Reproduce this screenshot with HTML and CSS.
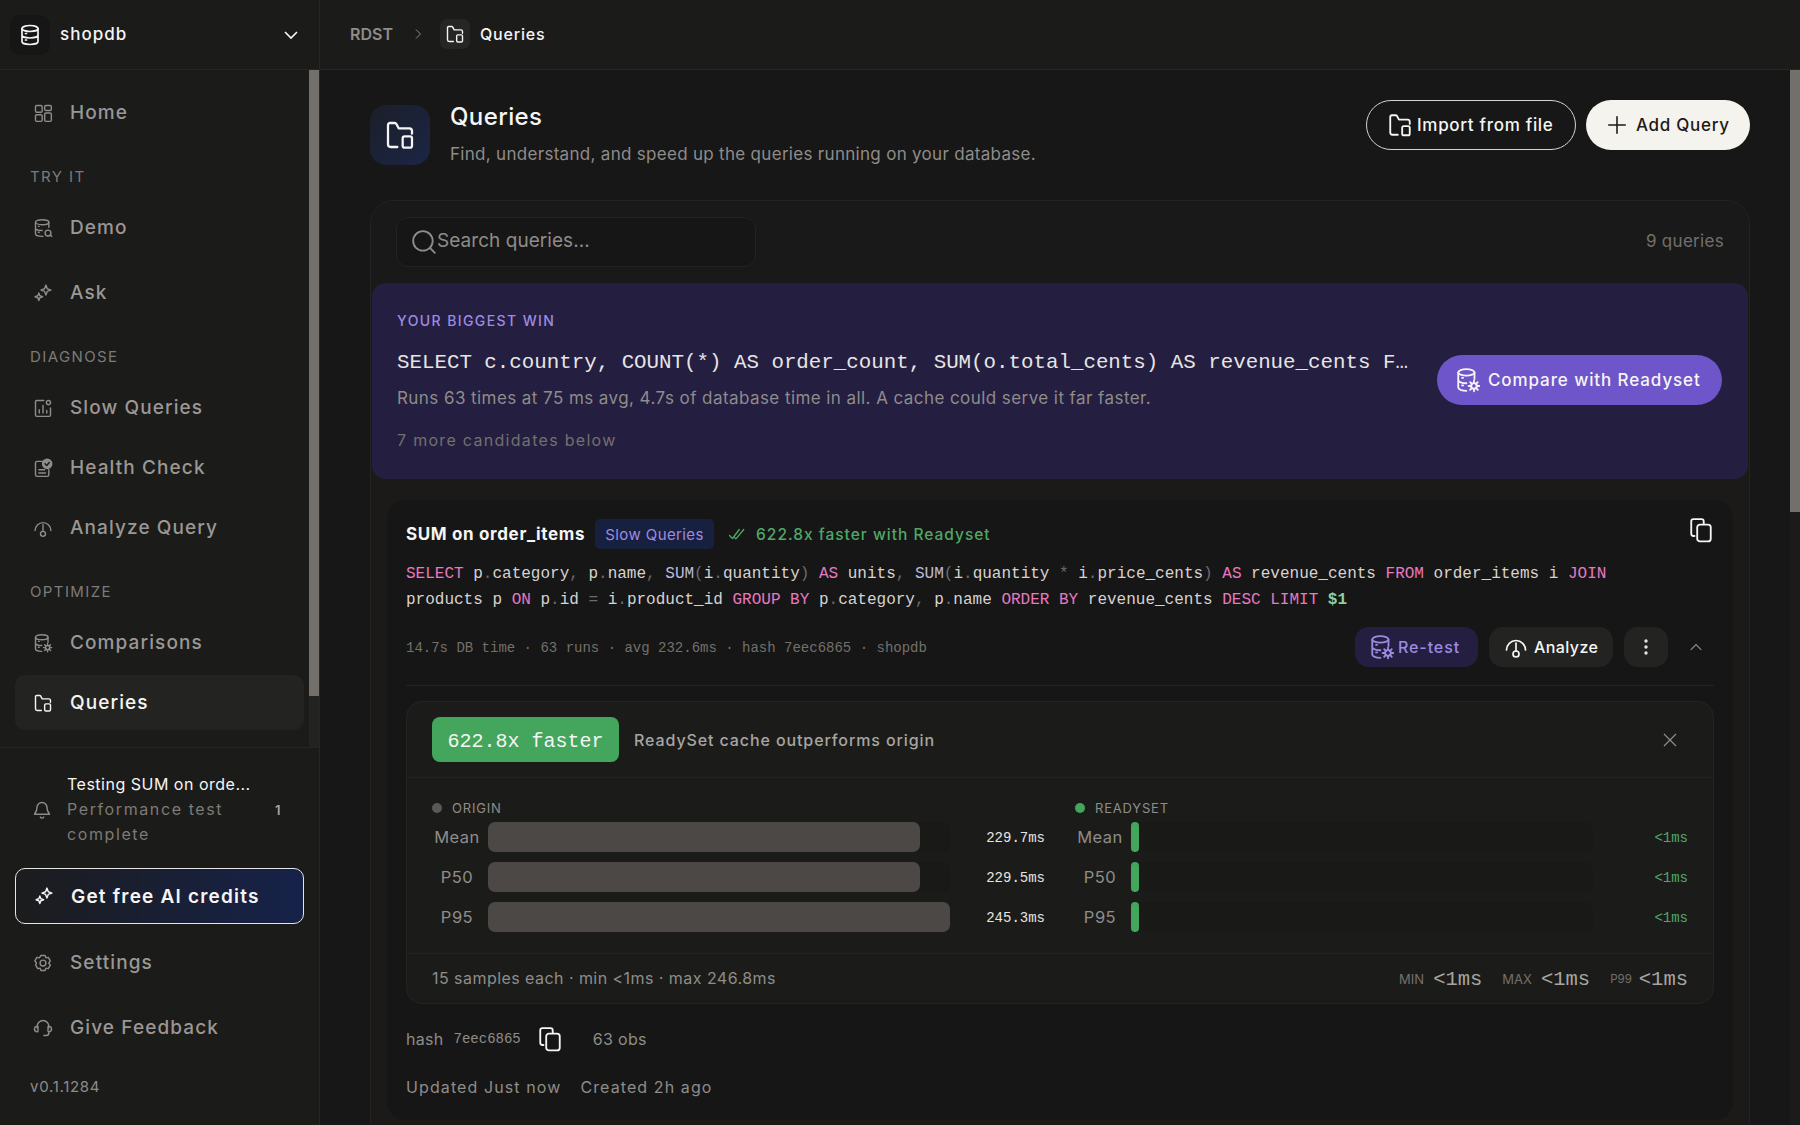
FILE: index.html
```html
<!DOCTYPE html>
<html lang="en">

<head>
  <meta charset="UTF-8" />
  <meta name="viewport" content="width=device-width, initial-scale=1" />
  <title>Queries</title>
  <link rel="stylesheet" href="styles.css">
</head>

<body>
  <!-- icon sprite -->
  <svg class="sprite" xmlns="http://www.w3.org/2000/svg">
    <symbol id="i-db" viewBox="0 0 24 24"><ellipse cx="12" cy="5.5" rx="8" ry="3"/><path d="M4 5.500v13c0 1.700 3.600 3 8 3s8-1.300 8-3v-13M4 12c0 1.700 3.600 3 8 3s8-1.300 8-3M7.500 10.500h1M7.500 17h1"/></symbol>
    <symbol id="i-home" viewBox="0 0 24 24"><rect x="3" y="3" width="8" height="8" rx="1.5"/><rect x="14" y="3" width="8" height="6" rx="1.5"/><rect x="3" y="14" width="8" height="8" rx="1.5"/><rect x="14" y="12" width="8" height="10" rx="1.5"/></symbol>
    <symbol id="i-db-search" viewBox="0 0 24 24"><ellipse cx="11" cy="5" rx="8" ry="3"/><path d="M3 5v14c0 1.700 3.600 3 8 3h1M19 5v6M3 12c0 1.700 3.600 3 8 3M6.500 10h1M6.500 17h1"/><circle cx="18" cy="18" r="3.500"/><path d="M20.500 20.500l2 1.500"/></symbol>
    <symbol id="i-db-gear" viewBox="0 0 24 24"><ellipse cx="10.5" cy="5" rx="7.5" ry="3"/><path d="M3 5v14c0 1.700 3.400 3 7.500 3M18 5v6M3 12c0 1.700 3.400 3 7.500 3M6.500 10h1M6.500 17h1"/><circle cx="17.5" cy="17.5" r="2.6"/><path d="M17.500 12.500v2.400M17.500 20v2.400M12.600 17.500H15M20 17.500h2.400M14 14l1.700 1.700M19.300 19.300l1.700 1.700M14 21l1.700-1.700M19.300 15.700L21 14"/></symbol>
    <symbol id="i-spark" viewBox="0 0 24 24"><path d="M15.500 2.500l1.600 4.400 4.400 1.600-4.400 1.600-1.600 4.400-1.600-4.400-4.400-1.600 4.400-1.600z"/><path d="M7 12l1.200 3.300 3.300 1.200-3.300 1.200L7 21l-1.200-3.300-3.300-1.200 3.300-1.200z"/></symbol>
    <symbol id="i-chart" viewBox="0 0 24 24"><path d="M13 3H4.500A1.500 1.500 0 0 0 3 4.500v16A1.500 1.500 0 0 0 4.500 22h15a1.500 1.500 0 0 0 1.500-1.500V12M7.500 18v-4M12 18V9M16.500 18v-3"/><circle cx="18.5" cy="5.5" r="2.5"/></symbol>
    <symbol id="i-check" viewBox="0 0 24 24"><path d="M12 4H5a2 2 0 0 0-2 2v14a2 2 0 0 0 2 2h12a2 2 0 0 0 2-2v-6M7 14h7M7 18h8"/><circle cx="17" cy="7" r="5.5" fill="currentColor"/><path d="M14.500 7l2 2 3-3.500" stroke="#1b1b1a"/></symbol>
    <symbol id="i-gauge" viewBox="0 0 24 24"><path d="M2.500 15a9.500 9.500 0 0 1 19 0"/><path d="M12 8v8"/><circle cx="12" cy="19" r="3"/></symbol>
    <symbol id="i-folder" viewBox="0 0 24 24"><path d="M10 21H5a2 2 0 0 1-2-2V4.500A1.500 1.500 0 0 1 4.500 3H8a1.500 1.500 0 0 1 1.300.8L11 7h8a2 2 0 0 1 2 2v2"/><rect x="14" y="13" width="7" height="8.5" rx="1.5"/></symbol>
    <symbol id="i-bell" viewBox="0 0 24 24"><path d="M6 9a6 6 0 0 1 12 0c0 5 2.500 7 3 8H3c.5-1 3-3 3-8zM10 20.500a2.200 2.200 0 0 0 4 0"/></symbol>
    <symbol id="i-gear" viewBox="0 0 24 24"><path d="M9.500 3h5l1 2.800 2.800-.6 2.500 4.300-1.900 2.500 1.900 2.500-2.500 4.300-2.800-.6-1 2.800h-5l-1-2.800-2.800.6-2.500-4.300L4.100 12 2.200 9.500l2.500-4.300 2.800.6z"/><circle cx="12" cy="12" r="3.5"/></symbol>
    <symbol id="i-headset" viewBox="0 0 24 24"><path d="M5 12V10a7 7 0 0 1 14 0v2M19 17v1a3 3 0 0 1-3 3h-3"/><path d="M5 10a3 3 0 0 0 0 6.500 1 1 0 0 0 1-1V10zM19 10a3 3 0 0 1 0 6.500 1 1 0 0 1-1-1V10z"/></symbol>
    <symbol id="i-copy" viewBox="0 0 24 24"><path d="M6 17.500H5a2 2 0 0 1-2-2V4a2 2 0 0 1 2-2h7.500a2 2 0 0 1 2 2v2.500"/><rect x="8.5" y="7" width="12.5" height="15.5" rx="2.5"/></symbol>
    <symbol id="i-double" viewBox="0 0 24 24"><path d="M2 14l4 4 9-12M9 17l1.500 1.500L21 6"/></symbol>
  </svg>

  <div class="app">
    <aside class="sidebar">
      <div class="db-switch">
        <span class="db-icon"><svg class="icon icon-white" width="24" height="24"><use href="#i-db"/></svg></span>
        <span class="db-name">shopdb</span>
        <svg class="db-caret" width="18" height="18" viewBox="0 0 24 24"><path d="M4 8l8 8 8-8"/></svg>
      </div>

      <div class="side-scroll">
        <nav class="nav">
          <a class="nav-item"><svg class="icon" width="20" height="20"><use href="#i-home"/></svg>Home</a>

          <div class="nav-label">TRY IT</div>
          <a class="nav-item"><svg class="icon" width="20" height="20"><use href="#i-db-search"/></svg>Demo</a>
          <a class="nav-item nav-item-spaced"><svg class="icon" width="20" height="20"><use href="#i-spark"/></svg>Ask</a>

          <div class="nav-label">DIAGNOSE</div>
          <a class="nav-item"><svg class="icon" width="20" height="20"><use href="#i-chart"/></svg>Slow Queries</a>
          <a class="nav-item nav-item-tight"><svg class="icon" width="20" height="20"><use href="#i-check"/></svg>Health Check</a>
          <a class="nav-item nav-item-tight"><svg class="icon" width="20" height="20"><use href="#i-gauge"/></svg>Analyze Query</a>

          <div class="nav-label">OPTIMIZE</div>
          <a class="nav-item"><svg class="icon" width="20" height="20"><use href="#i-db-gear"/></svg>Comparisons</a>
          <a class="nav-item nav-item-tight active"><svg class="icon icon-white" width="20" height="20"><use href="#i-folder"/></svg>Queries</a>
        </nav>
        <div class="scrollbar side-bar"><div class="thumb side-thumb"></div></div>
      </div>

      <div class="side-bottom">
        <div class="notice">
          <svg class="icon" width="20" height="20"><use href="#i-bell"/></svg>
          <div class="notice-text">
            <div class="notice-title">Testing SUM on orde...</div>
            <div class="notice-sub">Performance test complete</div>
          </div>
          <span class="notice-count">1</span>
        </div>
        <a class="credits"><svg class="icon icon-white" width="20" height="20"><use href="#i-spark"/></svg>Get free AI credits</a>
        <a class="nav-item nav-item-spaced"><svg class="icon" width="20" height="20"><use href="#i-gear"/></svg>Settings</a>
        <a class="nav-item nav-item-spaced"><svg class="icon" width="20" height="20"><use href="#i-headset"/></svg>Give Feedback</a>
        <div class="version">v0.1.1284</div>
      </div>
    </aside>

    <div class="main">
      <header class="topbar">
        <span class="crumb-root">RDST</span>
        <svg class="crumb-sep" width="12" height="12" viewBox="0 0 24 24"><path d="M8 3l9 9-9 9"/></svg>
        <span class="crumb-icon"><svg class="icon icon-white" width="20" height="20"><use href="#i-folder"/></svg></span>
        <span class="crumb-now">Queries</span>
      </header>

      <div class="body-row">
        <main class="content">
          <section class="page-head">
            <div class="page-icon"><svg class="icon icon-white" width="32" height="32"><use href="#i-folder"/></svg></div>
            <div class="page-titles">
              <h1>Queries</h1>
              <p>Find, understand, and speed up the queries running on your database.</p>
            </div>
            <div class="page-actions">
              <button class="btn btn-outline"><svg class="icon icon-white" width="26" height="26"><use href="#i-folder"/></svg>Import from file</button>
              <button class="btn btn-solid"><svg class="icon icon-dark" width="22" height="22" viewBox="0 0 24 24"><path d="M12 3v18M3 12h18"/></svg>Add Query</button>
            </div>
          </section>

          <section class="panel">
            <div class="panel-head">
              <div class="search">
                <svg class="icon search-icon" width="26" height="26" viewBox="0 0 24 24"><circle cx="11" cy="11" r="9"/><path d="M17.500 17.500L22 22"/></svg>
                <span class="search-text">Search queries...</span>
              </div>
              <span class="count">9 queries</span>
            </div>

            <div class="win">
              <div class="win-text">
                <div class="win-label">YOUR BIGGEST WIN</div>
                <div class="win-sql">SELECT c.country, COUNT(*) AS order_count, SUM(o.total_cents) AS revenue_cents F…</div>
                <div class="win-desc">Runs 63 times at 75 ms avg, 4.7s of database time in all. A cache could serve it far faster.</div>
                <div class="win-more">7 more candidates below</div>
              </div>
              <button class="btn btn-purple"><svg class="icon icon-white" width="26" height="26"><use href="#i-db-gear"/></svg>Compare with Readyset</button>
            </div>

            <article class="card">
              <div class="card-title">
                <strong>SUM on order_items</strong>
                <span class="tag">Slow Queries</span>
                <svg class="icon icon-green" width="18" height="18"><use href="#i-double"/></svg>
                <span class="faster">622.8x faster with Readyset</span>
                <svg class="icon icon-white card-copy" width="26" height="26"><use href="#i-copy"/></svg>
              </div>

              <pre class="sql"><b>SELECT</b> p<i>.</i>category<i>,</i> p<i>.</i>name<i>,</i> <u>SUM</u><i>(</i>i<i>.</i>quantity<i>)</i> <b>AS</b> units<i>,</i> <u>SUM</u><i>(</i>i<i>.</i>quantity <i>*</i> i<i>.</i>price_cents<i>)</i> <b>AS</b> revenue_cents <b>FROM</b> order_items i <b>JOIN</b>
products p <b>ON</b> p<i>.</i>id <i>=</i> i<i>.</i>product_id <b>GROUP BY</b> p<i>.</i>category<i>,</i> p<i>.</i>name <b>ORDER BY</b> revenue_cents <b>DESC LIMIT</b> <em>$1</em></pre>

              <div class="meta-row">
                <span class="meta">14.7s DB time · 63 runs · avg 232.6ms · hash 7eec6865 · shopdb</span>
                <button class="pill pill-purple"><svg class="icon" width="26" height="26"><use href="#i-db-gear"/></svg>Re-test</button>
                <button class="pill pill-analyze"><svg class="icon icon-white" width="24" height="24"><use href="#i-gauge"/></svg>Analyze</button>
                <button class="pill pill-more"><svg width="20" height="20" viewBox="0 0 20 20" fill="#e7e5e4"><circle cx="10" cy="4" r="1.7"/><circle cx="10" cy="10" r="1.7"/><circle cx="10" cy="16" r="1.7"/></svg></button>
                <svg class="collapse" width="14" height="14" viewBox="0 0 24 24"><path d="M3 17l9-9 9 9"/></svg>
              </div>

              <div class="result">
                <div class="result-head">
                  <span class="result-badge">622.8x faster</span>
                  <span class="result-text">ReadySet cache outperforms origin</span>
                  <svg class="result-close" width="16" height="16" viewBox="0 0 24 24"><path d="M3 3l18 18M21 3L3 21"/></svg>
                </div>

                <div class="result-body">
                  <div class="bars">
                    <div class="bars-label"><span class="dot dot-gray"></span>ORIGIN</div>
                    <div class="bar-row"><span class="bar-name">Mean</span><div class="track"><div class="fill" style="width: 93.6%"></div></div><span class="bar-val">229.7ms</span></div>
                    <div class="bar-row"><span class="bar-name">P50</span><div class="track"><div class="fill" style="width: 93.6%"></div></div><span class="bar-val">229.5ms</span></div>
                    <div class="bar-row"><span class="bar-name">P95</span><div class="track"><div class="fill" style="width: 100%"></div></div><span class="bar-val">245.3ms</span></div>
                  </div>
                  <div class="bars">
                    <div class="bars-label"><span class="dot dot-green"></span>READYSET</div>
                    <div class="bar-row"><span class="bar-name">Mean</span><div class="track"><div class="fill fill-green"></div></div><span class="bar-val val-green">&lt;1ms</span></div>
                    <div class="bar-row"><span class="bar-name">P50</span><div class="track"><div class="fill fill-green"></div></div><span class="bar-val val-green">&lt;1ms</span></div>
                    <div class="bar-row"><span class="bar-name">P95</span><div class="track"><div class="fill fill-green"></div></div><span class="bar-val val-green">&lt;1ms</span></div>
                  </div>
                </div>

                <div class="result-foot">
                  <span class="samples">15 samples each · min &lt;1ms · max 246.8ms</span>
                  <span class="stat"><small>MIN</small>&lt;1ms</span>
                  <span class="stat"><small>MAX</small>&lt;1ms</span>
                  <span class="stat stat-tight"><small>P99</small>&lt;1ms</span>
                </div>
              </div>

              <div class="hash-row">
                <span>hash</span>
                <code>7eec6865</code>
                <svg class="icon icon-white" width="26" height="26"><use href="#i-copy"/></svg>
                <span class="obs">63 obs</span>
              </div>
              <div class="dates">
                <span>Updated Just now</span>
                <span>Created 2h ago</span>
              </div>
            </article>
          </section>
        </main>
        <div class="scrollbar main-bar"><div class="thumb main-thumb"></div></div>
      </div>
    </div>
  </div>
</body>

</html>
```

FILE: styles.css
```css
* {
  margin: 0;
  padding: 0;
  box-sizing: border-box;
  font-family: "Inter", "Noto Sans", sans-serif;
}

html,
body {
  height: 100%;
  overflow: hidden;
}

body {
  background-color: #171717;
  color: #e7e5e4;
}

.sprite {
  display: none;
}

.icon {
  flex-shrink: 0;
  fill: none;
  stroke: currentColor;
  stroke-width: 1.7;
  stroke-linecap: round;
  stroke-linejoin: round;
  color: #8f8c89;
}

.icon-white {
  color: #f5f5f4;
}

.icon-dark {
  color: #1c1917;
}

.icon-green {
  color: #4fa866;
}

.app {
  display: flex;
  height: 100vh;
}

/* sidebar */
.sidebar {
  width: 320px;
  flex-shrink: 0;
  display: flex;
  flex-direction: column;
  background-color: #1b1b1a;
  border-right: 1px solid #262625;
}

.db-switch {
  height: 70px;
  flex-shrink: 0;
  display: flex;
  align-items: center;
  padding: 0 19px 0 10px;
  border-bottom: 1px solid #262625;
}

.db-icon {
  width: 40px;
  height: 40px;
  display: flex;
  align-items: center;
  justify-content: center;
  border-radius: 10px;
  background-color: #161616;
}

.db-name {
  margin: 0 0 2px 10px;
  flex: 1;
  font-size: 17px;
  font-weight: 500;
  letter-spacing: 1px;
  color: #f5f5f4;
}

.db-caret {
  fill: none;
  stroke: #f5f5f4;
  stroke-width: 2.2;
}

.side-scroll {
  height: 677px;
  flex-shrink: 0;
  display: flex;
}

.nav {
  flex: 1;
  padding: 15px 5px 0 15px;
}

.nav-item {
  height: 55px;
  display: flex;
  align-items: center;
  gap: 17px;
  padding: 0 18px;
  border-radius: 10px;
  font-size: 19px;
  font-weight: 500;
  letter-spacing: 1.1px;
  color: #9a9794;
}

.nav-item-spaced {
  margin-top: 10px;
}

.nav-item-tight {
  margin-top: 5px;
}

.nav-item.active {
  background-color: #232322;
  color: #f5f5f4;
}

.nav-label {
  height: 20px;
  margin: 27px 0 13px 15px;
  font-size: 15px;
  line-height: 20px;
  letter-spacing: 1.4px;
  color: #7d7a77;
}

.scrollbar {
  width: 10px;
  flex-shrink: 0;
  background-color: #232322;
}

.thumb {
  width: 100%;
  background-color: #73706b;
}

.side-thumb {
  height: 626px;
}

.main-bar {
  background-color: #1b1b1a;
}

.main-thumb {
  height: 442px;
}

.side-bottom {
  flex: 1;
  padding: 24px 15px 0;
  border-top: 1px solid #262625;
}

.notice {
  display: flex;
  align-items: center;
  padding-left: 17px;
}

.notice-text {
  width: 200px;
  margin-left: 15px;
  font-size: 16px;
  line-height: 25px;
  letter-spacing: 0.5px;
}

.notice-title {
  color: #f5f5f4;
}

.notice-sub {
  letter-spacing: 1.6px;
  color: #7d7a77;
}

.notice-count {
  margin-left: 8px;
  font-size: 13px;
  font-weight: 600;
  color: #a8a5a2;
}

.credits {
  height: 56px;
  margin-top: 21px;
  display: flex;
  align-items: center;
  gap: 17px;
  padding: 0 20px 0 18px;
  border: 1.5px solid #e7e5e4;
  border-radius: 10px;
  background: linear-gradient(90deg, #1c1c1c, #16224a);
  font-size: 19px;
  font-weight: 600;
  letter-spacing: 1.2px;
  color: #f5f5f4;
}

.credits + .nav-item {
  margin-top: 11px;
}

.version {
  margin: 22px 0 0 15px;
  font-size: 15px;
  line-height: 20px;
  letter-spacing: 0.7px;
  color: #8f8c89;
}

/* top bar */
.main {
  flex: 1;
  min-width: 0;
  display: flex;
  flex-direction: column;
}

.topbar {
  height: 70px;
  flex-shrink: 0;
  display: flex;
  align-items: center;
  padding: 0 0 1px 30px;
  background-color: #1b1b1a;
  border-bottom: 1px solid #262625;
}

.crumb-root {
  font-size: 16px;
  font-weight: 600;
  color: #8f8c89;
}

.crumb-sep {
  margin-left: 19px;
  fill: none;
  stroke: #8f8c89;
  stroke-width: 2;
}

.crumb-icon {
  width: 30px;
  height: 30px;
  margin-left: 16px;
  display: flex;
  align-items: center;
  justify-content: center;
  border-radius: 7px;
  background-color: #262625;
}

.crumb-now {
  margin-left: 10px;
  font-size: 16px;
  font-weight: 500;
  letter-spacing: 0.8px;
  color: #f5f5f4;
}

.body-row {
  flex: 1;
  min-height: 0;
  display: flex;
}

.content {
  flex: 1;
  min-width: 0;
  padding: 30px 40px 0 50px;
  overflow: hidden;
}

/* page head */
.page-head {
  height: 100px;
  display: flex;
  align-items: flex-start;
}

.page-icon {
  width: 60px;
  height: 60px;
  margin-top: 5px;
  display: flex;
  align-items: center;
  justify-content: center;
  border-radius: 16px;
  background: linear-gradient(135deg, #1c1f29, #1b2545);
}

.page-titles {
  margin-left: 20px;
  flex: 1;
}

h1 {
  font-size: 24px;
  line-height: 34px;
  font-weight: 500;
  letter-spacing: 0.4px;
  color: #f5f5f4;
}

.page-titles p {
  margin-top: 7px;
  font-size: 17px;
  line-height: 26px;
  letter-spacing: 0.3px;
  color: #8f8c89;
}

.page-actions {
  display: flex;
  gap: 10px;
}

.btn {
  height: 50px;
  display: flex;
  align-items: center;
  border-radius: 25px;
  border: none;
  font-size: 17px;
  font-weight: 500;
  letter-spacing: 0.7px;
  white-space: nowrap;
}

.btn-outline {
  width: 210px;
  gap: 4px;
  padding-left: 20px;
  background: transparent;
  border: 1px solid #d6d3d1;
  color: #f5f5f4;
}

.btn-solid {
  width: 164px;
  gap: 8px;
  padding-left: 20px;
  background-color: #f5f3ee;
  color: #1c1917;
}

.btn-purple {
  width: 285px;
  flex-shrink: 0;
  gap: 7px;
  margin-bottom: 2px;
  padding-left: 18px;
  letter-spacing: 0.9px;
  background-color: #6e55c9;
  color: #f5f5f4;
}

/* panel */
.panel {
  height: 1000px;
  border: 1px solid #232322;
  border-bottom: none;
  border-radius: 24px 24px 0 0;
  background-color: #1b1a19;
  overflow: hidden;
}

.panel-head {
  height: 82px;
  display: flex;
  align-items: center;
  justify-content: space-between;
  padding: 0 25px 0 25px;
  background-color: #191919;
}

.search {
  width: 360px;
  height: 50px;
  display: flex;
  align-items: center;
  padding-left: 14px;
  border: 1px solid #232322;
  border-radius: 12px;
  background-color: #161616;
  font-size: 19px;
  color: #8f8c89;
}

.search-text {
  margin-bottom: 3px;
  letter-spacing: 0.05px;
}

.count {
  margin-bottom: 3px;
  font-size: 17px;
  letter-spacing: 0.3px;
  color: #73706b;
}

.win {
  height: 196px;
  display: flex;
  align-items: center;
  gap: 28px;
  margin: 0 1px;
  padding: 0 26px 0 25px;
  border-radius: 14px;
  background-color: #241e41;
}

.win-text {
  flex: 1;
  min-width: 0;
}

.win-label {
  font-size: 14px;
  font-weight: 500;
  letter-spacing: 1.4px;
  line-height: 20px;
  color: #9d8be0;
}

.win-sql {
  margin-top: 19px;
  font-family: "Liberation Mono", monospace;
  font-size: 20.8px;
  line-height: 26px;
  color: #e7e5e4;
  white-space: nowrap;
}

.win-desc {
  margin-top: 10px;
  font-size: 17px;
  line-height: 24px;
  letter-spacing: 0.43px;
  color: #8f8c89;
}

.win-more {
  margin-top: 19px;
  font-size: 16px;
  line-height: 22px;
  letter-spacing: 1.3px;
  color: #73706b;
}

/* query card */
.card {
  height: 620px;
  margin: 21px 16px 0;
  padding: 19px 19px 0 19px;
  border-radius: 18px;
  background-color: #161616;
}

.card-title {
  height: 30px;
  display: flex;
  align-items: center;
}

.card-title strong {
  font-size: 17px;
  font-weight: 700;
  letter-spacing: 0.65px;
  color: #f5f5f4;
}

.tag {
  width: 119px;
  height: 30px;
  margin: 0 14px 0 10px;
  display: flex;
  align-items: center;
  justify-content: center;
  border-radius: 5px;
  background-color: #182040;
  font-size: 15px;
  letter-spacing: 0.4px;
  color: #9d8be0;
}

.faster {
  margin-left: 10px;
  font-size: 15.5px;
  font-weight: 500;
  letter-spacing: 1px;
  color: #4fa866;
}

.card-copy {
  margin-left: auto;
  margin-top: -8px;
}

.sql {
  margin-top: 12px;
  font-family: "Liberation Mono", monospace;
  font-size: 16px;
  line-height: 26px;
  color: #d6d3d1;
}

.sql b {
  font-family: inherit;
  font-weight: 400;
  color: #e879c0;
}

.sql i {
  font-family: inherit;
  font-style: normal;
  color: #6b6a70;
}

.sql u {
  font-family: inherit;
  text-decoration: none;
  color: #bdbbd8;
}

.sql em {
  font-family: inherit;
  font-style: normal;
  font-weight: 700;
  color: #8fcfa0;
}

.meta-row {
  height: 40px;
  margin-top: 14px;
  display: flex;
  align-items: center;
  gap: 11px;
}

.meta {
  flex: 1;
  padding-top: 2px;
  font-family: "Liberation Mono", monospace;
  font-size: 14px;
  color: #73706b;
}

.pill {
  height: 40px;
  flex-shrink: 0;
  display: flex;
  align-items: center;
  gap: 6px;
  padding: 0 15px;
  border: none;
  border-radius: 14px;
  background-color: #232322;
  font-size: 16px;
  font-weight: 500;
  letter-spacing: 0.4px;
  white-space: nowrap;
  color: #f5f5f4;
}

.pill-purple {
  width: 123px;
  gap: 3px;
  padding: 0 14px;
  letter-spacing: 0.9px;
  background-color: #241e41;
  color: #9d8be0;
}

.pill-purple .icon {
  color: #9d8be0;
}

.pill-analyze {
  width: 124px;
}

.pill-more {
  width: 44px;
  justify-content: center;
  padding: 0;
}

.collapse {
  margin: 0 11px 0 10px;
  fill: none;
  stroke: #8f8c89;
  stroke-width: 2;
}

/* result box */
.result {
  margin-top: 34px;
  position: relative;
  border: 1px solid #232322;
  border-radius: 16px;
  background-color: #1b1c1a;
}

.result::before {
  content: "";
  position: absolute;
  left: -1px;
  right: -1px;
  top: -17px;
  height: 1px;
  background-color: #232322;
}

.result-head {
  height: 76px;
  display: flex;
  align-items: center;
  padding: 0 35px 0 25px;
  border-bottom: 1px solid #222421;
}

.result-badge {
  width: 187px;
  height: 45px;
  padding-top: 3px;
  display: flex;
  align-items: center;
  justify-content: center;
  border-radius: 8px;
  background-color: #44a65c;
  font-family: "Liberation Mono", monospace;
  font-size: 20px;
  color: #f5f5f4;
}

.result-text {
  flex: 1;
  margin-left: 15px;
  font-size: 16px;
  font-weight: 500;
  letter-spacing: 0.9px;
  color: #a8a5a2;
}

.result-close {
  fill: none;
  stroke: #8f8c89;
  stroke-width: 1.8;
}

.result-body {
  display: grid;
  grid-template-columns: 1fr 1fr;
  gap: 30px;
  padding: 20px 25px 21px;
}

.bars-label {
  height: 20px;
  margin-bottom: 4px;
  display: flex;
  align-items: center;
  gap: 10px;
  font-size: 13px;
  letter-spacing: 0.8px;
  color: #8f8c89;
}

.dot {
  width: 10px;
  height: 10px;
  border-radius: 50%;
}

.dot-gray {
  background-color: #5b5957;
}

.dot-green {
  background-color: #44a65c;
}

.bar-row {
  height: 30px;
  margin-bottom: 10px;
  display: flex;
  align-items: center;
}

.bar-row:last-child {
  margin-bottom: 0;
}

.bar-name {
  width: 56px;
  padding-right: 6px;
  flex-shrink: 0;
  text-align: center;
  font-size: 16.5px;
  letter-spacing: 0.5px;
  color: #8f8c89;
}

.track {
  width: 462px;
  height: 30px;
  flex-shrink: 0;
  border-radius: 7px;
  background-color: #191a18;
}

.fill {
  height: 100%;
  border-radius: 7px;
  background-color: #4b4845;
}

.fill-green {
  width: 8px;
  border-radius: 4px;
  background-color: #44a65c;
}

.bar-val {
  flex: 1;
  padding-top: 2px;
  text-align: right;
  font-family: "Liberation Mono", monospace;
  font-size: 14px;
  color: #e7e5e4;
}

.val-green {
  color: #4fa866;
}

.result-foot {
  height: 50px;
  display: flex;
  align-items: center;
  gap: 20px;
  padding: 0 25px 2px 25px;
  border-top: 1px solid #222421;
}

.samples {
  flex: 1;
  font-size: 16px;
  letter-spacing: 0.45px;
  color: #8f8c89;
}

.stat {
  display: flex;
  align-items: center;
  gap: 9px;
  padding-top: 4px;
  font-family: "Liberation Mono", monospace;
  font-size: 20.5px;
  color: #a8a5a2;
}

.stat small {
  margin-top: -2px;
  font-size: 13px;
  color: #73706b;
}

.stat-tight {
  gap: 7px;
}

.stat-tight small {
  font-size: 11.5px;
}

.hash-row {
  height: 30px;
  margin-top: 20px;
  display: flex;
  align-items: center;
  font-size: 16px;
  letter-spacing: 0.3px;
  color: #8f8c89;
}

.hash-row code {
  margin-left: 10px;
  font-family: "Liberation Mono", monospace;
  font-size: 14px;
  letter-spacing: 0;
}

.hash-row .icon {
  margin-left: 16px;
}

.obs {
  margin-left: 30px;
}

.dates {
  margin-top: 21px;
  display: flex;
  gap: 19px;
  font-size: 16px;
  line-height: 24px;
  letter-spacing: 1.1px;
  color: #8f8c89;
}
```
